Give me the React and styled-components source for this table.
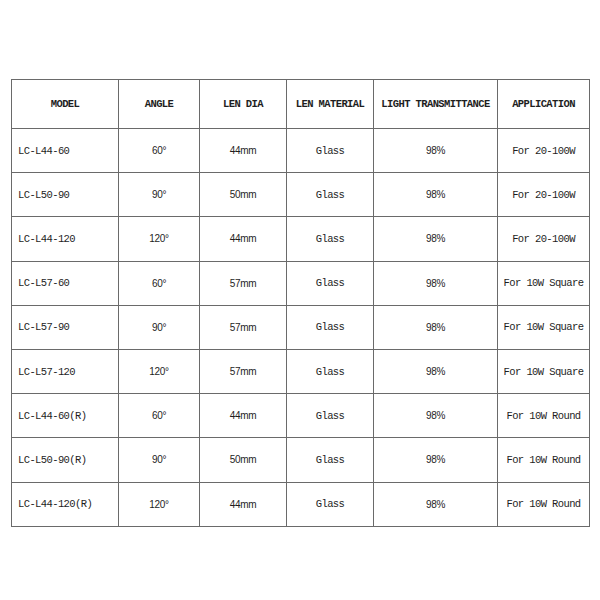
import React from 'react';
import styled, { createGlobalStyle } from 'styled-components';

const GlobalStyle = createGlobalStyle`
    html, body {
        margin: 0;
        padding: 0;
        background: #ffffff;
    }
`;

const Page = styled.div`
    width: 600px;
    height: 600px;
    padding: 79px 0 0 11px;
    box-sizing: border-box;
    background: #fff;
`;

const Table = styled.table`
    border-collapse: collapse;
    table-layout: fixed;
    width: 578px;
    color: #1e1e1e;
    td, th {
        border: 1px solid #6a6a6a;
        padding: 0;
    }
`;

const HeadRow = styled.tr`
    height: 49px;
`;

const BodyRow = styled.tr`
    height: 44.2px;
`;

const HeadCell = styled.th`
    font-family: "Liberation Mono", "DejaVu Sans Mono", monospace;
    font-size: 10.5px;
    font-weight: bold;
    letter-spacing: -0.6px;
    text-align: center;
    vertical-align: middle;
`;

const MonoCell = styled.td`
    font-family: "Liberation Mono", "DejaVu Sans Mono", monospace;
    font-size: 10.5px;
    letter-spacing: -0.6px;
    text-align: ${(p) => (p.left ? 'left' : 'center')};
    padding-left: ${(p) => (p.left ? '6px' : '0')} !important;
    vertical-align: middle;
`;

const SansCell = styled.td`
    font-family: "Liberation Sans", Arial, sans-serif;
    font-size: 10px;
    letter-spacing: -0.3px;
    text-align: center;
    vertical-align: middle;
`;

const columns = [
    { title: 'MODEL', width: 107 },
    { title: 'ANGLE', width: 81 },
    { title: 'LEN DIA', width: 87 },
    { title: 'LEN MATERIAL', width: 87 },
    { title: 'LIGHT TRANSMITTANCE', width: 124 },
    { title: 'APPLICATION', width: 92 },
];

const rows = [
    ['LC-L44-60', '60°', '44mm', 'For 20-100W'],
    ['LC-L50-90', '90°', '50mm', 'For 20-100W'],
    ['LC-L44-120', '120°', '44mm', 'For 20-100W'],
    ['LC-L57-60', '60°', '57mm', 'For 10W Square'],
    ['LC-L57-90', '90°', '57mm', 'For 10W Square'],
    ['LC-L57-120', '120°', '57mm', 'For 10W Square'],
    ['LC-L44-60(R)', '60°', '44mm', 'For 10W Round'],
    ['LC-L50-90(R)', '90°', '50mm', 'For 10W Round'],
    ['LC-L44-120(R)', '120°', '44mm', 'For 10W Round'],
];

const App = () => {
    return (
        <Page>
            <GlobalStyle />
            <Table>
                <colgroup>
                    {columns.map((c) => (
                        <col key={c.title} style={{ width: c.width }} />
                    ))}
                </colgroup>
                <thead>
                    <HeadRow>
                        {columns.map((c) => (
                            <HeadCell key={c.title}>{c.title}</HeadCell>
                        ))}
                    </HeadRow>
                </thead>
                <tbody>
                    {rows.map(([model, angle, dia, app]) => (
                        <BodyRow key={model}>
                            <MonoCell left>{model}</MonoCell>
                            <SansCell>{angle}</SansCell>
                            <SansCell>{dia}</SansCell>
                            <MonoCell>Glass</MonoCell>
                            <SansCell>98%</SansCell>
                            <MonoCell>{app}</MonoCell>
                        </BodyRow>
                    ))}
                </tbody>
            </Table>
        </Page>
    );
};

export default App;
